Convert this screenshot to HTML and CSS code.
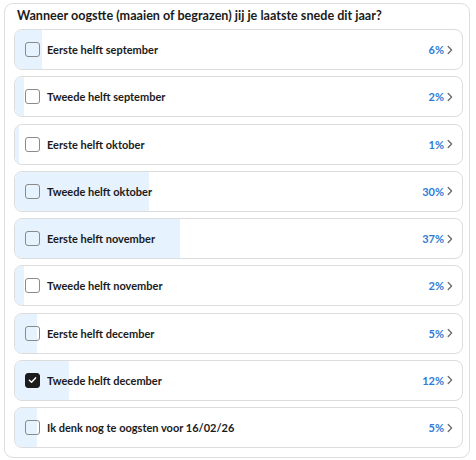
FILE: index.html
```html
<!DOCTYPE html>
<html lang="nl">
<head>
<meta charset="utf-8">
<link rel="stylesheet" href="styles.css">
</head>
<body>
<div class="card">
  <div class="title">Wanneer oogstte (maaien of begrazen) jij je laatste snede dit jaar?</div>
  <div class="list">
    <div class="row"><div class="fill" style="width:6%"></div><span class="box"></span><span class="label">Eerste helft september</span><span class="pct">6%</span><svg class="chev" viewBox="0 0 6 10"><path d="M1.2 1.5 L4.6 5 L1.2 8.5"/></svg></div>
    <div class="row"><div class="fill" style="width:2%"></div><span class="box"></span><span class="label">Tweede helft september</span><span class="pct">2%</span><svg class="chev" viewBox="0 0 6 10"><path d="M1.2 1.5 L4.6 5 L1.2 8.5"/></svg></div>
    <div class="row"><div class="fill" style="width:1%"></div><span class="box"></span><span class="label">Eerste helft oktober</span><span class="pct">1%</span><svg class="chev" viewBox="0 0 6 10"><path d="M1.2 1.5 L4.6 5 L1.2 8.5"/></svg></div>
    <div class="row"><div class="fill" style="width:30%"></div><span class="box"></span><span class="label">Tweede helft oktober</span><span class="pct">30%</span><svg class="chev" viewBox="0 0 6 10"><path d="M1.2 1.5 L4.6 5 L1.2 8.5"/></svg></div>
    <div class="row"><div class="fill" style="width:37%"></div><span class="box"></span><span class="label">Eerste helft november</span><span class="pct">37%</span><svg class="chev" viewBox="0 0 6 10"><path d="M1.2 1.5 L4.6 5 L1.2 8.5"/></svg></div>
    <div class="row"><div class="fill" style="width:2%"></div><span class="box"></span><span class="label">Tweede helft november</span><span class="pct">2%</span><svg class="chev" viewBox="0 0 6 10"><path d="M1.2 1.5 L4.6 5 L1.2 8.5"/></svg></div>
    <div class="row"><div class="fill" style="width:5%"></div><span class="box"></span><span class="label">Eerste helft december</span><span class="pct">5%</span><svg class="chev" viewBox="0 0 6 10"><path d="M1.2 1.5 L4.6 5 L1.2 8.5"/></svg></div>
    <div class="row"><div class="fill" style="width:12%"></div><span class="box checked"><svg viewBox="0 0 16 16"><path d="M4.2 8.3 L6.8 10.8 L11.8 5.4"/></svg></span><span class="label">Tweede helft december</span><span class="pct">12%</span><svg class="chev" viewBox="0 0 6 10"><path d="M1.2 1.5 L4.6 5 L1.2 8.5"/></svg></div>
    <div class="row"><div class="fill" style="width:5%"></div><span class="box"></span><span class="label">Ik denk nog te oogsten voor 16/02/26</span><span class="pct">5%</span><svg class="chev" viewBox="0 0 6 10"><path d="M1.2 1.5 L4.6 5 L1.2 8.5"/></svg></div>
  </div>
</div>
</body>
</html>
```
FILE: styles.css
```css
* { box-sizing: border-box; }
html, body { margin: 0; padding: 0; background: #ffffff; }
body {
  font-family: Lato, "Noto Sans", sans-serif;
  color: #1b1b1b;
}
.card {
  margin: 3px 0 0 4px;
  width: 466px;
  height: 455px;
  border: 1px solid #dedede;
  border-radius: 9px;
  padding: 3px 6px 8px 9px;
  display: flex;
  flex-direction: column;
}
.title {
  font-size: 12.6px;
  font-weight: 700;
  line-height: 18px;
  padding-left: 3px;
  margin-bottom: 4px;
  white-space: nowrap;
}
.list {
  display: flex;
  flex-direction: column;
  gap: 6.25px;
}
.row {
  position: relative;
  height: 41px;
  border: 1px solid #dcdcdc;
  border-radius: 8px;
  overflow: hidden;
  display: flex;
  align-items: center;
  padding: 0 9px 0 10px;
  background: #ffffff;
}
.fill {
  position: absolute;
  left: 0; top: 0; bottom: 0;
  background: #e6f2fe;
}
.box {
  position: relative;
  width: 15px;
  height: 15px;
  border: 1.3px solid #8a8a8a;
  border-radius: 3px;
  flex: none;
  display: flex;
  align-items: center;
  justify-content: center;
}
.box.checked {
  background: #1c1c1c;
  border-color: #1c1c1c;
}
.box.checked svg {
  width: 14px; height: 14px;
  fill: none;
  stroke: #ffffff;
  stroke-width: 1.8;
  stroke-linecap: round;
  stroke-linejoin: round;
}
.label {
  position: relative;
  margin-left: 7px;
  font-size: 11px;
  font-weight: 700;
  flex: 1;
  white-space: nowrap;
}
.pct {
  position: relative;
  font-size: 11px;
  font-weight: 700;
  color: #2f7bd6;
}
.chev {
  position: relative;
  width: 6px;
  height: 10px;
  margin-left: 3px;
  fill: none;
  stroke: #6b6b6b;
  stroke-width: 1.3;
  stroke-linecap: round;
  stroke-linejoin: round;
}
```
